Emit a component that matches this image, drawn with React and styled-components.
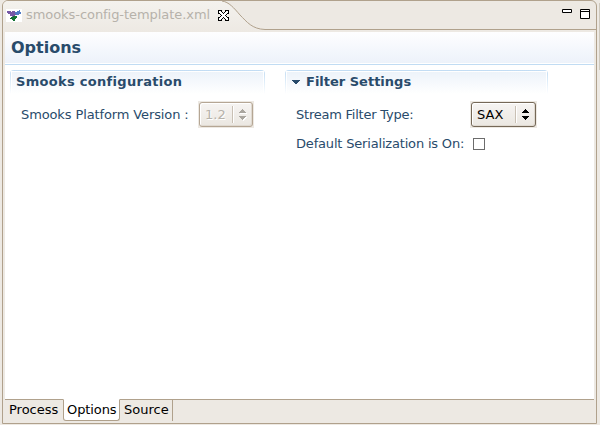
import React from "react";
import styled, { createGlobalStyle, css } from "styled-components";

const Global = createGlobalStyle`
  * { box-sizing: border-box; }
  body { margin: 0; background: #ede9e3; overflow: hidden; }
`;

const Workbench = styled.div`
  width: 600px;
  height: 425px;
  padding: 0 0 1px 2px;
  display: flex;
  background: #ede9e3;
  font: 13.33px/16px "DejaVu Sans", sans-serif;
  color: #294b6b;
  white-space: nowrap;
`;

const EditorFrame = styled.div`
  width: 595px;
  height: 424px;
  border: 1px solid #b0a18c;
  border-radius: 6px 6px 0 0;
  display: flex;
  flex-direction: column;
  overflow: hidden;
`;

const Sash = styled.div`
  width: 1px;
  height: 67px;
  margin: 3px 0 0 2px;
  background: #cfc9be;
`;

const TabBar = styled.header`
  height: 31px;
  display: grid;
  flex: none;
`;

const TabOutline = styled.svg`
  grid-area: 1 / 1;
  display: block;
`;

const TabContent = styled.div`
  grid-area: 1 / 1;
  display: flex;
  padding: 0 6px 0 3px;
`;

const FileIcon = styled.svg`
  width: 16px;
  height: 13px;
  margin-top: 8px;
`;

const FileName = styled.span`
  width: 185px;
  margin: 6px 0 0 4px;
  color: #b6b2aa;
  font-size: 13px;
  letter-spacing: -0.06px;
`;

const CloseIcon = styled.svg`
  width: 11px;
  height: 11px;
  margin: 9px 0 0 7px;
`;

const WindowControls = styled.svg`
  width: 28px;
  height: 11px;
  margin: 7px 0 0 auto;
`;

const FormPage = styled.main`
  height: 367px;
  margin: 0 2px;
  background: #fff;
`;

const FormHeader = styled.h1`
  height: 33px;
  margin: 0;
  padding: 6px 0 0 6px;
  background:
    linear-gradient(#c1dcf3, #c1dcf3) 0 32px / 100% 1px no-repeat,
    linear-gradient(#fefeff, #edf2fa) 0 0 / 100% 31px no-repeat;
  font-size: 16px;
  line-height: 19px;
  font-weight: bold;
`;

const Sections = styled.div`
  display: flex;
  gap: 20px;
  padding: 5px 0 0 5px;
`;

const Section = styled.section`
  width: ${(p) => p.$width};
`;

const SectionTitle = styled.h2`
  height: 24px;
  margin: 0;
  padding: 4px 0 0 6px;
  display: flex;
  border-radius: 4px 4px 0 0;
  background:
    linear-gradient(#edf3fa, #fff) 2px 2px / calc(100% - 4px) 22px no-repeat,
    linear-gradient(#fff, #fff) 1px 1px / calc(100% - 2px) 23px no-repeat,
    linear-gradient(#c1dcf3, #fff);
  font-size: 13px;
  line-height: 16px;
  font-weight: bold;
  letter-spacing: ${(p) => p.$spacing || "0"};
`;

const Twistie = styled.svg`
  width: 9px;
  height: 5px;
  margin: 6px 6px 0 0;
`;

const FieldRow = styled.div`
  height: ${(p) => p.$height};
  padding-left: 11px;
  display: flex;
  align-items: center;
`;

const SectionBody = styled.div`
  padding-top: 7px;
`;

const Label = styled.label`
  width: ${(p) => p.$width};
  flex: none;
  font-size: 13px;
  letter-spacing: ${(p) => p.$spacing || "0"};
`;

const Combo = styled.div`
  width: ${(p) => p.$width};
  height: 27px;
  padding: 1px;
  background: #ede9e3;
  color: #000;
  ${(p) => p.$disabled && css`
    color: #b6b2aa;
    text-shadow: 1px 1px #fff;
  `}
`;

const ComboFace = styled.div`
  height: 25px;
  padding: 0 1px 0 5px;
  display: flex;
  align-items: center;
  font-size: 13px;
  border: 1px solid ${(p) => (p.$disabled ? "#b5a694" : "#756857")};
  border-radius: 3px;
  background: linear-gradient(#f6f4f2, #ebe7e1);
  box-shadow: inset 1px 1px #fff, inset -1px -1px #dfd9d0;
`;

const ComboArrows = styled.svg`
  width: 19px;
  height: 17px;
  margin-left: auto;
`;

const CheckBox = styled.span`
  width: 12px;
  height: 12px;
  margin-left: 2px;
  border: 1px solid #6c6c6c;
  background: #fff;
`;

const PageTabs = styled.nav`
  height: 24px;
  display: flex;
  margin: 0 2px;
  color: #000;
  background: linear-gradient(#b0a18c, #b0a18c) 0 0 / 100% 1px no-repeat;
`;

const PageTab = styled.span`
  width: ${(p) => p.$width};
  height: 22px;
  padding: 3px 0 0 4px;
  font-size: 13px;
  border-right: ${(p) => (p.$last ? "1px solid #b0a18c" : "0")};
  ${(p) => p.$active && css`
    padding: 2px 0 0 3px;
    letter-spacing: -0.1px;
    border: 1px solid #b0a18c;
    border-top-color: #fff;
    border-radius: 0 0 3px 3px;
    background: #fff;
  `}
`;

function Arrows({ color, shadow }) {
  return (
    <ComboArrows viewBox="0 0 19 17" shapeRendering="crispEdges">
      <path d="M0.5 0V17" stroke="#c9c0b4" />
      <path d="M1.5 0V17" stroke="#fff" />
      {shadow && <path d="M8 8L11.5 4L15 8ZM8 11H15L11.5 15Z" fill="#fff" />}
      <path d="M7 7H14V6H13V5H12V4H11V3H10V4H9V5H8V6H7ZM7 10H14V11H13V12H12V13H11V14H10V13H9V12H8V11H7Z" fill={color} />
    </ComboArrows>
  );
}

function PlatformCombo() {
  return (
    <Combo $width="56px" $disabled>
      <ComboFace $disabled>1.2<Arrows color="#aaa69f" shadow /></ComboFace>
    </Combo>
  );
}

export default function App() {
  return (
    <>
      <Global />
      <Workbench>
        <EditorFrame>
          <TabBar>
            <TabOutline width="593" height="31" viewBox="0 0 593 31">
              <defs>
                <linearGradient id="tab" x2="0" y2="1">
                  <stop stopColor="#f4f2ee" />
                  <stop offset="1" stopColor="#ede9e3" />
                </linearGradient>
              </defs>
              <path d="M0 0H219C226 1 231 7 237 14C244 21 249 28 262 28.5V31H0Z" fill="url(#tab)" />
              <path d="M219 0C226 1 231 7 237 14C244 21 249 28 262 28.5H593" fill="none" stroke="#b0a18c" />
            </TabOutline>
            <TabContent>
              <FileIcon viewBox="0 0 16 13">
                <path fill="#fff" d="M0 0H16V13H0Z" />
                <path fill="#7658a6" d="M1 2H5V3H6V2H9V3H10V6H9V7H7V8H6V7H4V5H2V4H1Z" />
                <path fill="#507bc5" d="M9 5V3H11V2H13V1H14V3H15V5H13V6H10V5Z" />
                <path fill="#137334" d="M7 8V7H11V9H10V10H9V12H7V11H6V10H4V9H5V8Z" />
              </FileIcon>
              <FileName>smooks-config-template.xml</FileName>
              <CloseIcon viewBox="0 0 11 11" shapeRendering="crispEdges">
                <path fill="#fff" stroke="#000" d="M.5 .5H3.5V1.5L5.5 3.5L7.5 1.5V.5H10.5V3.5H9.5L7.5 5.5L9.5 7.5H10.5V10.5H7.5V9.5L5.5 7.5L3.5 9.5V10.5H.5V7.5H1.5L3.5 5.5L1.5 3.5H.5Z" />
              </CloseIcon>
              <WindowControls viewBox="0 0 28 11" fill="#fff" stroke="#000">
                <path d="M.5 1.5H9.5V4.5H.5ZM18.5 1.5H27.5V10.5H18.5ZM18.5 3.5H27.5" />
              </WindowControls>
            </TabContent>
          </TabBar>
          <FormPage>
            <FormHeader>Options</FormHeader>
            <Sections>
              <Section $width="255px">
                <SectionTitle $spacing="0.3px">Smooks configuration</SectionTitle>
                <SectionBody>
                  <FieldRow $height="27px">
                    <Label $width="177px" $spacing="-0.12px">Smooks Platform Version :</Label>
                    <PlatformCombo />
                  </FieldRow>
                </SectionBody>
              </Section>
              <Section $width="263px">
                <SectionTitle>
                  <Twistie viewBox="0 0 9 5" shapeRendering="crispEdges">
                    <path fill="#294b6b" d="M1 0H9V1H8V2H7V3H6V4H4V3H3V2H2V1H1Z" />
                  </Twistie>
                  Filter Settings
                </SectionTitle>
                <SectionBody>
                  <FieldRow $height="27px">
                    <Label $width="174px" $spacing="-0.23px">Stream Filter Type:</Label>
                    <Combo $width="67px">
                      <ComboFace>SAX<Arrows color="#000" /></ComboFace>
                    </Combo>
                  </FieldRow>
                  <FieldRow $height="32px">
                    <Label $width="175px" $spacing="-0.18px">Default Serialization is On:</Label>
                    <CheckBox />
                  </FieldRow>
                </SectionBody>
              </Section>
            </Sections>
          </FormPage>
          <PageTabs>
            <PageTab $width="58px">Process</PageTab>
            <PageTab $width="57px" $active>Options</PageTab>
            <PageTab $width="53px" $last>Source</PageTab>
          </PageTabs>
        </EditorFrame>
        <Sash />
      </Workbench>
    </>
  );
}
